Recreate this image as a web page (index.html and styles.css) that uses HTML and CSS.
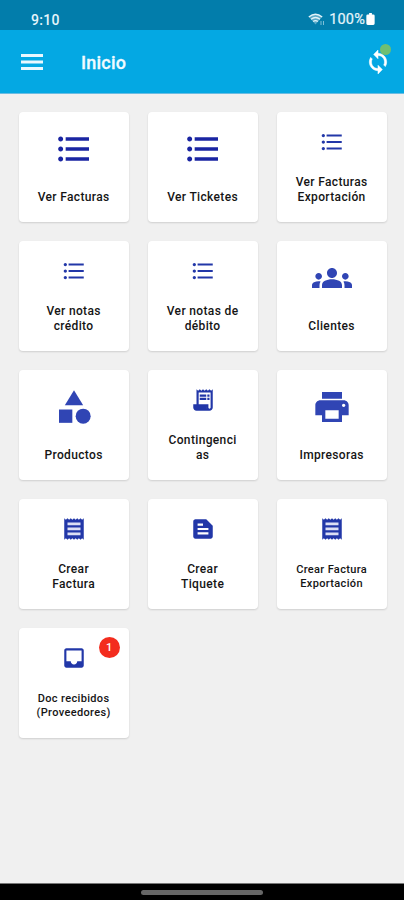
FILE: index.html
```html
<!DOCTYPE html>
<html lang="es">
<head>
<meta charset="utf-8">
<title>Inicio</title>
<link rel="stylesheet" href="styles.css">
</head>
<body>
<svg width="0" height="0" class="defs">
  <symbol id="list" viewBox="0 0 24 24"><path d="M4 10.500c-.83 0-1.500.67-1.500 1.500s.67 1.500 1.500 1.500 1.500-.67 1.500-1.500-.67-1.500-1.500-1.500zm0-6c-.83 0-1.500.67-1.500 1.500S3.170 7.500 4 7.500 5.500 6.830 5.500 6 4.830 4.500 4 4.500zm0 12c-.83 0-1.500.68-1.500 1.500s.68 1.500 1.500 1.500 1.500-.68 1.500-1.500-.67-1.500-1.500-1.500zM7 19h14v-2H7v2zm0-6h14v-2H7v2zm0-8v2h14V5H7z"/></symbol>
  <symbol id="receipt" viewBox="0 0 24 24"><path d="M3 22l1.500-1.500L6 22l1.500-1.500L9 22l1.500-1.500L12 22l1.500-1.500L15 22l1.500-1.500L18 22l1.500-1.500L21 22V2l-1.500 1.500L18 2l-1.500 1.500L15 2l-1.500 1.500L12 2l-1.500 1.500L9 2 7.500 3.500 6 2 4.500 3.500 3 2v20z"/><path fill="#dcdff4" d="M6 6h12v2.600H6zM6 10.600h12v2.600H6zM6 15.200h12v2.600H6z"/></symbol>
</svg>
<div class="status">
  <span class="time">9:10</span>
  <svg class="wifi" viewBox="0 0 17 13"><path d="M1 4Q7.500-1.500 14 4L7.500 11.500Z" fill="#fff" fill-opacity=".35"/><path d="M.8 4Q7.500-1.500 14.200 4M3 6.300Q7.500 2.700 12 6.300M5.200 8.600Q7.500 6.800 9.800 8.600" fill="none" stroke="#e2f4fa" stroke-width="1.300"/><path d="M13 8v4M15.500 8v4" stroke="#9ed0e2" stroke-width=".8"/></svg>
  <span class="percent">100%</span>
  <svg class="battery" viewBox="0 0 9 13"><path d="M3 0h3v1.500h1.500q1.500 0 1.500 1.500v8.500q0 1.500-1.500 1.500h-6Q0 13 0 11.500V3q0-1.500 1.500-1.500H3z" fill="#fff"/></svg>
</div>
<header class="bar">
  <svg class="menu" viewBox="0 0 22 16"><path d="M0 0h22v3H0zM0 6.500h22v3H0zM0 13h22v3H0z" fill="#e9f8ff"/></svg>
  <h1 class="title">Inicio</h1>
  <div class="sync">
    <svg viewBox="0 0 24 24"><path fill="#fff" stroke="#fff" stroke-width=".5" d="M12 4V1L8 5l4 4V6c3.310 0 6 2.690 6 6 0 1.010-.25 1.970-.7 2.800l1.460 1.460C19.540 15.030 20 13.570 20 12c0-4.420-3.580-8-8-8zm0 14c-3.310 0-6-2.690-6-6 0-1.010.25-1.970.7-2.800L5.240 7.740C4.460 8.970 4 10.430 4 12c0 4.420 3.580 8 8 8v3l4-4-4-4v3z"/></svg>
    <span class="dot"></span>
  </div>
</header>
<main class="grid">
  <div class="card"><div class="pic"><svg class="big list"><use href="#list"/></svg></div><div class="label">Ver Facturas</div></div>
  <div class="card"><div class="pic"><svg class="big list"><use href="#list"/></svg></div><div class="label">Ver Ticketes</div></div>
  <div class="card"><div class="pic"><svg><use href="#list"/></svg></div><div class="label">Ver Facturas<br>Exportación</div></div>
  <div class="card"><div class="pic"><svg><use href="#list"/></svg></div><div class="label">Ver notas<br>crédito</div></div>
  <div class="card"><div class="pic"><svg><use href="#list"/></svg></div><div class="label">Ver notas de<br>débito</div></div>
  <div class="card"><div class="pic"><svg class="big" viewBox="0 0 24 24"><path d="M12 12.750c1.630 0 3.070.39 4.240.9 1.080.48 1.760 1.560 1.760 2.730V18H6v-1.610c0-1.180.68-2.260 1.760-2.730 1.170-.52 2.610-.91 4.240-.91zM4 13c1.100 0 2-.9 2-2s-.9-2-2-2-2 .9-2 2 .9 2 2 2zm1.130 1.100C4.760 14.040 4.390 14 4 14c-.99 0-1.930.21-2.780.58C.48 14.900 0 15.620 0 16.430V18h4.500v-1.610c0-.83.23-1.610.63-2.290zM20 13c1.100 0 2-.9 2-2s-.9-2-2-2-2 .9-2 2 .9 2 2 2zm4 3.430c0-.81-.48-1.530-1.220-1.850-.85-.37-1.790-.58-2.780-.58-.39 0-.76.04-1.130.1.400.68.630 1.460.630 2.290V18H24v-1.570zM12 6c1.660 0 3 1.340 3 3s-1.340 3-3 3-3-1.340-3-3 1.340-3 3-3z"/></svg></div><div class="label">Clientes</div></div>
  <div class="card"><div class="pic"><svg class="big" viewBox="0 0 24 24"><path d="M12 2l-5.500 9h11z"/><circle cx="17.500" cy="17.500" r="4.500"/><path d="M3 13.500h8v8H3z"/></svg></div><div class="label">Productos</div></div>
  <div class="card"><div class="pic"><svg viewBox="0 0 24 24"><path d="M19.500 3.500 18 2l-1.500 1.500L15 2l-1.500 1.500L12 2l-1.500 1.500L9 2 7.500 3.500 6 2v14H3v3c0 1.660 1.340 3 3 3h12c1.660 0 3-1.340 3-3V2l-1.500 1.500zM15 20H6c-.55 0-1-.45-1-1v-1h10v2zm4-1c0 .55-.45 1-1 1s-1-.45-1-1v-3H8V5h11v14zM9 7h6v2H9zM16 7h2v2h-2zM9 10h6v2H9zM16 10h2v2h-2z"/><path d="M4.500 17.500h11v3h-11z"/></svg></div><div class="label">Contingenci<br>as</div></div>
  <div class="card"><div class="pic"><svg class="big" viewBox="0 0 24 24"><path d="M19 8H5c-1.660 0-3 1.340-3 3v6h4v4h12v-4h4v-6c0-1.660-1.340-3-3-3zm-3 11H8v-5h8v5zm3-7c-.55 0-1-.45-1-1s.45-1 1-1 1 .45 1 1-.45 1-1 1zm-1-9H6v4h12V3z"/></svg></div><div class="label">Impresoras</div></div>
  <div class="card"><div class="pic"><svg><use href="#receipt"/></svg></div><div class="label">Crear<br>Factura</div></div>
  <div class="card"><div class="pic"><svg viewBox="0 0 24 24"><path d="M15 3H5c-1.100 0-1.990.9-1.990 2L3 19c0 1.100.89 2 1.990 2H19c1.100 0 2-.9 2-2V9l-6-6zM7 7h5v2H7V7zm10 10H7v-2h10v2zm0-4H7v-2h10v2z"/></svg></div><div class="label">Crear<br>Tiquete</div></div>
  <div class="card"><div class="pic"><svg><use href="#receipt"/></svg></div><div class="label small">Crear Factura<br>Exportación</div></div>
  <div class="card"><div class="pic"><svg viewBox="0 0 24 24"><path d="M19 3H4.990c-1.110 0-1.980.89-1.980 2L3 19c0 1.100.88 2 1.990 2H19c1.100 0 2-.9 2-2V5c0-1.110-.9-2-2-2zm0 12h-4c0 1.660-1.350 3-3 3s-3-1.340-3-3H4.990V5H19v10z"/></svg></div><div class="label small">Doc recibidos<br>(Proveedores)</div><span class="badge">1</span></div>
</main>
<footer class="nav"><span class="handle"></span></footer>
</body>
</html>
```
FILE: styles.css
```css
* { box-sizing: border-box; }
body {
  margin: 0;
  width: 404px;
  height: 900px;
  display: flex;
  flex-direction: column;
  background: #f0f0f0;
  font-family: Roboto, "Liberation Sans", sans-serif;
  overflow: hidden;
}
svg { display: block; }
.defs { position: absolute; }
.status {
  height: 30px;
  flex: none;
  display: flex;
  align-items: center;
  padding: 8px 29px 0 31px;
  background: #027dab;
  color: #e6f5fb;
  font-size: 14px;
  font-weight: 500;
}
.time { flex: 1; letter-spacing: 0.3px; padding-top: 1px; }
.wifi { width: 17px; height: 13px; margin-right: 4px; }
.percent { font-weight: 400; font-size: 14.5px; letter-spacing: 0.2px; -webkit-text-stroke: 0.2px #e6f5fb; }
.battery { width: 9px; height: 12px; margin-left: 1px; }
.bar {
  height: 64px;
  flex: none;
  display: flex;
  align-items: center;
  padding: 0 13px 0 21px;
  background: #04a8e3;
  border-bottom: 1px solid #6bbce2;
}
.menu { width: 22px; height: 16px; }
.title {
  flex: 1;
  margin: 1px 0 0 38px;
  color: #f1fbff;
  font-size: 18px;
  font-weight: 500;
  letter-spacing: 0.2px;
  -webkit-text-stroke: 0.3px #f1fbff;
}
.sync { position: relative; width: 26px; height: 26px; }
.sync svg { width: 26px; height: 26px; }
.dot {
  position: absolute;
  right: 0;
  top: -5px;
  width: 11px;
  height: 11px;
  border-radius: 50%;
  background: #6fbf73;
}
.grid {
  flex: 1;
  display: grid;
  grid-template-columns: repeat(3, 110px);
  grid-auto-rows: 110px;
  gap: 19px;
  align-content: start;
  padding: 18px 0 0 18.6px;
}
.card {
  position: relative;
  display: flex;
  flex-direction: column;
  align-items: center;
  justify-content: space-between;
  padding: 17px 0;
  border-radius: 4px;
  background: #fff;
  box-shadow: 0 1px 2px rgba(0, 0, 0, 0.14);
}
.pic { flex: none; }
.pic svg { width: 26px; height: 26px; fill: #2237a8; }
.pic svg.big { width: 40px; height: 40px; fill: #3045b4; }
.pic svg.list { fill: #1a25a2; }
.label {
  color: #151515;
  font-size: 12px;
  line-height: 15px;
  font-weight: 500;
  letter-spacing: 0.35px;
  text-align: center;
  white-space: nowrap;
}
.small { font-size: 11px; line-height: 14px; margin-bottom: 1px; }
.badge {
  position: absolute;
  top: 9px;
  right: 9px;
  width: 21px;
  height: 21px;
  border-radius: 50%;
  background: #f32c1e;
  color: #fff;
  font-size: 11px;
  line-height: 21px;
  font-weight: 500;
  text-align: center;
}
.nav {
  height: 17px;
  flex: none;
  display: flex;
  justify-content: center;
  align-items: center;
  background: #000;
  border-top: 1px solid #777;
}
.handle { width: 122px; height: 5px; border-radius: 3px; background: #666; }
```
